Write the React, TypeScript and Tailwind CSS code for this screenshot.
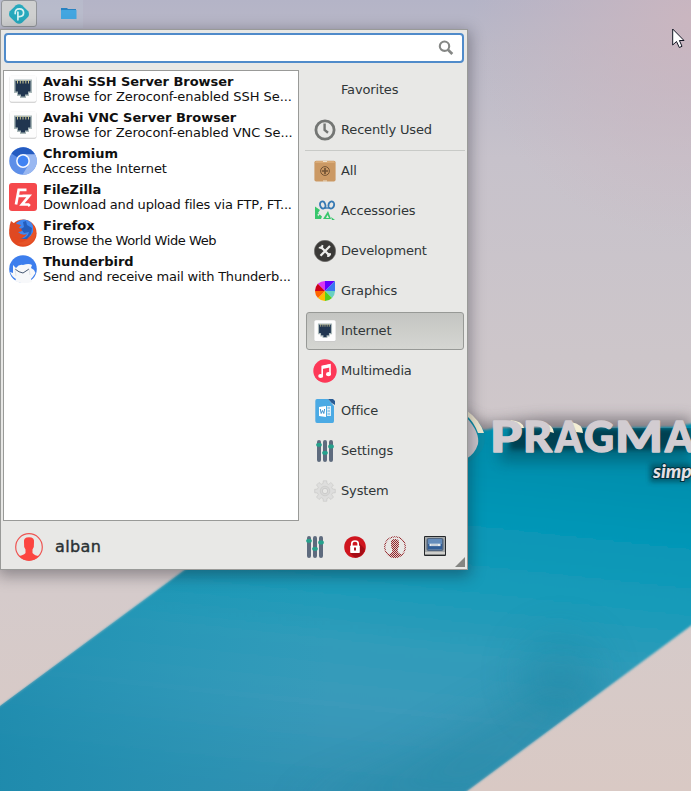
import React from 'react';

function Wallpaper() {
  return (
    <svg className="absolute inset-0" width="691" height="791" viewBox="0 0 691 791">
      <defs>
        <linearGradient id="sky" x1="0" y1="0" x2="0" y2="1">
          <stop offset="0" stopColor="#b4b4c7" />
          <stop offset="0.06" stopColor="#bbb9c7" />
          <stop offset="0.2" stopColor="#c7c2cb" />
          <stop offset="0.45" stopColor="#cdc6ca" />
          <stop offset="0.75" stopColor="#d5cbcb" />
          <stop offset="1" stopColor="#d9c9c4" />
        </linearGradient>
        <radialGradient id="blush" cx="691" cy="20" r="220" gradientUnits="userSpaceOnUse">
          <stop offset="0" stopColor="#ccb6bf" stopOpacity="0.9" />
          <stop offset="1" stopColor="#ccb6bf" stopOpacity="0" />
        </radialGradient>
        <linearGradient id="sea" x1="400" y1="430" x2="360" y2="800" gradientUnits="userSpaceOnUse">
          <stop offset="0" stopColor="#058dab" />
          <stop offset="0.2" stopColor="#0396b6" />
          <stop offset="0.4" stopColor="#189bb9" />
          <stop offset="0.58" stopColor="#309cba" />
          <stop offset="0.75" stopColor="#3a9aba" />
          <stop offset="1" stopColor="#3190b1" />
        </linearGradient>
        <linearGradient id="seaLeft" x1="0" y1="0" x2="330" y2="0" gradientUnits="userSpaceOnUse">
          <stop offset="0" stopColor="#1287aa" stopOpacity="0.6" />
          <stop offset="1" stopColor="#1295b6" stopOpacity="0" />
        </linearGradient>
        <filter id="soft" x="-5%" y="-5%" width="110%" height="110%"><feGaussianBlur stdDeviation="1.3" /></filter>
        <filter id="cloud" x="-50%" y="-50%" width="200%" height="200%"><feGaussianBlur stdDeviation="20" /></filter>
        <filter id="shade" x="-20%" y="-80%" width="140%" height="260%"><feGaussianBlur stdDeviation="7" /></filter>
        <filter id="drop" x="-10%" y="-30%" width="120%" height="160%"><feGaussianBlur stdDeviation="2.5" /></filter>
        <clipPath id="band"><path d="M0 706L186 569L370 430H486L500 428H691V625L467 791H0Z" /></clipPath>
      </defs>
      <rect width="691" height="791" fill="url(#sky)" />
      <rect width="691" height="260" fill="url(#blush)" />
      <path d="M460 410L484 424L540 418H691V445H460Z" fill="#504c52" opacity=".6" filter="url(#shade)" />
      <path d="M-10 714L186 569L370 430H486L495 428Q600 428 675 427L700 422V619L467 791L440 811H-10Z" fill="url(#sea)" filter="url(#soft)" />
      <g clipPath="url(#band)">
        <rect y="400" width="400" height="400" fill="url(#seaLeft)" />
        <path d="M290 810L400 765L560 670L610 700L480 800Z" fill="#23849f" opacity=".38" filter="url(#cloud)" />
        <ellipse cx="560" cy="675" rx="42" ry="42" fill="#16809d" opacity=".26" filter="url(#cloud)" />
        <path d="M510 428H691V450H510Z" fill="#002e3a" opacity=".8" filter="url(#drop)" />
        <path d="M500 440H691V462H500Z" fill="#004455" opacity=".45" filter="url(#shade)" />
        <path d="M650 464H691V482H650Z" fill="#00303c" opacity=".55" filter="url(#drop)" />
      </g>
      <path d="M466 413C483 422 489 436 482 450Q475 459 466 464Z" fill="#098ba6" />
      <path d="M466 417Q480 432 478 444Q475 454 466 459Z" fill="#cbc6cb" />
      <path d="M466 410Q480 420 484 433L478 433Q474 422 466 415Z" fill="#eee7cf" />
      <path d="M510 420Q523 421 524 428L519 428Q515 423 510 420ZM543 423Q553 424 554 433L547 431ZM571 422Q583 424 583 433L576 432Z" fill="#f5eed4" />
      <g fontFamily="Lato, Inter, sans-serif" fontWeight="900" fontSize="42" strokeLinejoin="round" fill="#d2ccd1" stroke="#d2ccd1" strokeWidth="1.4">
        <text x="490" y="452" textLength="32" lengthAdjust="spacingAndGlyphs">P</text>
        <text x="523" y="452" textLength="29" lengthAdjust="spacingAndGlyphs">R</text>
        <text x="555" y="452" textLength="27" lengthAdjust="spacingAndGlyphs">A</text>
        <text x="584" y="452" textLength="30" lengthAdjust="spacingAndGlyphs">G</text>
        <text x="615" y="452" textLength="48" lengthAdjust="spacingAndGlyphs">M</text>
        <text x="665" y="452" textLength="29" lengthAdjust="spacingAndGlyphs">A</text>
      </g>
      <text x="653" y="478" fontFamily="Lato, sans-serif" fontWeight="900" fontStyle="italic" fontSize="19.5" fill="#e4e0e4" stroke="#00303c" strokeWidth="2" paintOrder="stroke">simp</text>
    </svg>
  );
}

function Ethernet({ size = 28 }: { size?: number }) {
  return (
    <svg className="shrink-0" width={size} height={size} viewBox="0 0 28 28">
      <rect x=".5" y=".7" width="27" height="27" rx="2" fill="#c9c9c9" />
      <rect x=".5" y=".3" width="27" height="26.4" rx="2" fill="#fdfdfd" />
      <path d="M5 4.5H23V18H20V21H17V23H11V21H8V18H5Z" fill="#aab8b9" />
      <path d="M6.5 6H21.5V16.5H19V19.5H16V21.5H12V19.5H9V16.5H6.5Z" fill="#213650" />
      <path d="M8.5 5V8.5M11.3 5V8.5M14 5V8.5M16.8 5V8.5M19.5 5V8.5" stroke="#c9c391" strokeWidth="1" />
    </svg>
  );
}
function Chromium() {
  return (
    <svg className="shrink-0" width="28" height="28" viewBox="0 0 28 28">
      <circle cx="14" cy="14" r="13.8" fill="#5e8fe8" />
      <path d="M14 14L2.5 6.6A13.8 13.8 0 0 1 26 7.2Z" fill="#245bc0" />
      <path d="M14 7.2H26A13.8 13.8 0 0 1 13.5 27.8L20 17Z" fill="#9ab8f1" />
      <circle cx="14" cy="14" r="6.9" fill="#f8faff" /><circle cx="14" cy="14" r="5.4" fill="#4083f3" />
    </svg>
  );
}
function FileZilla() {
  return (
    <svg className="shrink-0" width="28" height="28" viewBox="0 0 28 28">
      <rect width="28" height="28" rx="3" fill="#f5494c" />
      <path d="M7 21.5L9.7 6.8H17.5M8.6 13H14.6M13.5 12.8H20.2L13 21.5H19.4L20.8 23" fill="none" stroke="#fff" strokeWidth="2.7" />
    </svg>
  );
}
function Firefox() {
  return (
    <svg className="shrink-0" width="28" height="28" viewBox="0 0 28 28">
      <circle cx="14" cy="14.2" r="13.6" fill="#e2481f" />
      <circle cx="15" cy="10" r="9.6" fill="#4087ef" />
      <path d="M2 2Q5 5 8 5L12 6L10 9L14 10Q13 13 9 13Q13 17 18 15Q13 22 6 18L1 18Q-1 9 2 2Z" fill="#df4922" />
      <path d="M14 3L17 2L18 6L23 9L22 15L18 20L11 20Q19 19 20 13L15 14L12 10L15 8Z" fill="#255dbb" />
      <path d="M24 6Q30 14 24 22Q17 29 8 24Q20 23 24 13Z" fill="#e65328" />
    </svg>
  );
}
function Thunderbird() {
  return (
    <svg className="shrink-0" width="28" height="28" viewBox="0 0 28 28">
      <circle cx="14" cy="14" r="13.8" fill="#3d7eed" />
      <path d="M1 17L4 18L4 10L7 13Q10 9 14 10Q20 8 23 10L22 13L25 15L26.5 18Q24 22 22 24L23 27Q14 30 6 26L7 24Q3 22 1 17Z" fill="#f7f8fa" />
      <path d="M6 14Q10 17.5 14 18L20 14" fill="none" stroke="#465873" strokeWidth="1" />
      <path d="M6 14L7 21M20 14L21 20" stroke="#d7dbe1" strokeWidth=".7" />
    </svg>
  );
}
function Sliders() {
  return (
    <svg width="22" height="22" viewBox="0 0 22 22">
      <path d="M5 2V20M11 2V20M17 2V20" stroke="#5e6b7e" strokeWidth="4" strokeLinecap="round" />
      <path d="M4 4.8H6M10 12.8H12M16 6.5H18" stroke="#25a18c" strokeWidth="3.8" strokeLinecap="round" />
    </svg>
  );
}
function Recent() {
  return <svg width="22" height="22" viewBox="0 0 22 22"><circle cx="11" cy="11" r="9.1" fill="none" stroke="#747674" strokeWidth="2.8" /><path d="M10.6 4.5V11L14 13.8" fill="none" stroke="#747674" strokeWidth="2.4" /></svg>;
}
function All() {
  return (
    <svg width="22" height="22" viewBox="0 0 22 22">
      <rect x=".4" y=".8" width="21.2" height="20.8" rx="1.8" fill="#cb9964" /><path d="M2 1H20L21 3H1Z" fill="#d9ab78" />
      <path d="M9 1H13V2H9ZM9 20.5H13V21.5H9Z" fill="#eee1cd" />
      <circle cx="11" cy="11" r="4.4" fill="none" stroke="#735334" /><path d="M11 8V14M8 11H14" stroke="#735334" strokeWidth="1.7" />
    </svg>
  );
}
function Accessories() {
  return (
    <svg width="22" height="22" viewBox="0 0 22 22">
      <path d="M1 6.5L6 10L4 13L8 16.5L7 19L1 19ZM9 19L14 11L17 19ZM17 17L21 20H18Z" fill="#38c66c" />
      <ellipse cx="8.7" cy="5" rx="2.6" ry="3.6" fill="#e8e8e6" stroke="#3679b3" strokeWidth="1.8" transform="rotate(-18 8.7 5)" />
      <ellipse cx="17.3" cy="5" rx="2.8" ry="3.6" fill="#e8e8e6" stroke="#3679b3" strokeWidth="1.8" transform="rotate(18 17.3 5)" />
      <path d="M10.5 8H16" stroke="#3679b3" strokeWidth="1.4" />
      <path d="M3.5 14H6L4 16.5ZM13.5 15L15 18H12Z" fill="#e8e8e6" />
    </svg>
  );
}
function Development() {
  return (
    <svg width="22" height="22" viewBox="0 0 22 22">
      <circle cx="11" cy="11" r="10.7" fill="#3b3a38" stroke="#757472" strokeWidth=".6" />
      <path d="M6.5 6.5L16 16M16 6L6.5 15.8" stroke="#ededeb" strokeWidth="2.2" />
      <path d="M4.8 7.5L8 8.3L8.5 5M14 17L14.3 14L17 14.2" stroke="#ededeb" strokeWidth="1.8" fill="none" />
    </svg>
  );
}
function Graphics() {
  return (
    <svg width="22" height="22" viewBox="0 0 22 22">
      <path d="M11 11L3.8 3.8Q7 1 11 1Z" fill="#d936f2" /><path d="M11 11V1H21Z" fill="#6500ff" /><path d="M11 11L21 1V11Z" fill="#3977f1" />
      <path d="M11 11H21Q21 15 18 18Z" fill="#69d0c3" /><path d="M11 11L18 18Q15 21 11 21Z" fill="#58cf1b" /><path d="M11 11V21Q7 21 4 18Z" fill="#ffbd00" />
      <path d="M11 11L4 18Q1 15 1 11Z" fill="#ff6500" /><path d="M11 11H1Q1 7 3.8 3.8Z" fill="#ce001b" />
    </svg>
  );
}
function Multimedia() {
  return <svg width="24" height="24" viewBox="0 0 24 24"><circle cx="12" cy="12" r="11.7" fill="#fd3857" /><path d="M9.2 17V7.3L17 5.8V15" stroke="#fff" strokeWidth="1.6" fill="none" /><path d="M9.2 6.9L17 5.3V8.6L9.2 10Z" fill="#fff" /><ellipse cx="7.7" cy="17" rx="2.5" ry="2.1" fill="#fff" /><ellipse cx="15.5" cy="15.2" rx="2.5" ry="2.1" fill="#fff" /></svg>;
}
function Office() {
  return (
    <svg width="22" height="24" viewBox="0 0 22 24">
      <path d="M3 0H14L20 7V22Q20 24 18.5 24H3Q1.3 24 1.3 22V2Q1.3 0 3 0Z" fill="#4baae4" /><path d="M14 0H19L21 2V6Q17 4 14 0Z" fill="#285a93" />
      <path d="M13 7H17V17H13Z" fill="#dceef9" /><path d="M5 8L12 7V18L5 17Z" fill="#fff" /><path d="M6.3 10L7.2 14.5L8.5 11.5L9.8 14.5L10.6 10" fill="none" stroke="#3b91ce" /><path d="M13.5 9H16M13.5 12H16M13.5 15H16" stroke="#62acd9" />
    </svg>
  );
}
function Gear() {
  return (
    <svg width="22" height="22" viewBox="0 0 22 22">
      <g fill="#dededd" stroke="#c6c6c5" strokeWidth=".6">
        <path d="M9 3.5L9.3 .8H12.7L13 3.5L14.7 4.4L16.8 2.5L19.4 5L17.7 7.2L18.5 9L21.3 9.3V12.7L18.5 13L17.7 14.8L19.5 17L17 19.5L14.8 17.7L13 18.5L12.7 21.3H9.3L9 18.5L7.2 17.7L5 19.5L2.5 17L4.3 14.8L3.5 13L.7 12.7V9.3L3.5 9L4.3 7.2L2.5 5L5 2.5L7.2 4.3Z" />
        <circle cx="11" cy="11" r="4.8" fill="#d8d8d7" /><circle cx="11" cy="11" r="2.7" fill="#e7e7e5" stroke="#bcbcbc" />
      </g>
    </svg>
  );
}
function User() {
  return (
    <svg width="28" height="28" viewBox="0 0 28 28"><circle cx="14" cy="14" r="13.3" fill="none" stroke="#ee5553" strokeWidth="1.2" />
      <path d="M9 9Q8.3 4.2 14 4.2Q19.7 4.2 19 9L18.8 14L17.5 16.5V20Q20 23 24 23Q20 27.5 14 27.5Q8 27.5 4 23Q9 22 10.5 20V16.5L9.2 14Z" fill="#fc4540" />
    </svg>
  );
}
function Lock() {
  return <svg width="22" height="22" viewBox="0 0 22 22"><circle cx="11" cy="11" r="10.8" fill="#cf151e" /><path d="M15 7L21 13Q19 21 11 21.8L6 17Z" fill="#a50d16" /><path d="M7.8 10V7.5Q7.8 5 11 5Q14.2 5 14.2 7.5V10" fill="none" stroke="#fff" strokeWidth="1.7" /><rect x="6.2" y="9.5" width="9.6" height="7.5" rx=".8" fill="#fff" /><path d="M11 11.5V14.5" stroke="#ad1820" strokeWidth="2" /></svg>;
}
function SwitchUser() {
  return (
    <svg width="22" height="22" viewBox="0 0 22 22">
      <defs><pattern id="dots" width="2" height="2" patternUnits="userSpaceOnUse"><rect width="2" height="2" fill="#e2cccb" /><rect width="1" height="1" fill="#8f252a" /><rect x="1" y="1" width="1" height="1" fill="#8f252a" /></pattern></defs>
      <circle cx="11" cy="11" r="10.3" fill="none" stroke="url(#dots)" strokeWidth="1.1" />
      <path d="M7 7Q6.5 3 11 3Q15.5 3 15 7L14.8 11L13.8 13V16Q16 18.5 19 18.5Q15 22 11 22Q7 22 3 18.5Q7 18 8.2 16V13L7.2 11Z" fill="url(#dots)" />
    </svg>
  );
}
function Monitor() {
  return (
    <svg className="mb-0.5" width="22" height="20" viewBox="0 0 22 20">
      <rect width="22" height="20" rx="1" fill="#24282b" /><rect x="1" y="1" width="20" height="15" fill="#a4a8a9" /><path d="M1 16H21V18.6H1Z" fill="#cfcfcc" />
      <rect x="2.5" y="2" width="17" height="13" rx="2" fill="#526782" /><rect x="4" y="3" width="14" height="10.5" rx="1" fill="#648cbb" /><path d="M4 8H18V13H4Z" fill="#315e97" /><rect x="5.5" y="7.7" width="11" height="2.4" fill="#e9edf0" /><path d="M7 9H14" stroke="#7e92a8" strokeWidth=".6" />
    </svg>
  );
}

const apps = [
  { icon: <Ethernet />, name: 'Avahi SSH Server Browser', text: 'Browse for Zeroconf-enabled SSH Se...', title: 'tracking-[-0.06px]', body: 'tracking-[-0.05px]' },
  { icon: <Ethernet />, name: 'Avahi VNC Server Browser', text: 'Browse for Zeroconf-enabled VNC Se...', title: 'tracking-normal', body: 'tracking-[-0.07px]' },
  { icon: <Chromium />, name: 'Chromium', text: 'Access the Internet', title: 'tracking-normal', body: 'tracking-[-0.1px]' },
  { icon: <FileZilla />, name: 'FileZilla', text: 'Download and upload files via FTP, FT...', title: 'tracking-normal', body: 'tracking-[-0.21px]' },
  { icon: <Firefox />, name: 'Firefox', text: 'Browse the World Wide Web', title: 'tracking-normal', body: 'tracking-[-0.4px]' },
  { icon: <Thunderbird />, name: 'Thunderbird', text: 'Send and receive mail with Thunderb...', title: 'tracking-normal', body: 'tracking-[-0.21px]' },
];
const categories = [
  { name: 'All', icon: <All /> },
  { name: 'Accessories', icon: <Accessories /> },
  { name: 'Development', icon: <Development /> },
  { name: 'Graphics', icon: <Graphics /> },
  { name: 'Internet', icon: <Ethernet size={22} />, active: true },
  { name: 'Multimedia', icon: <Multimedia /> },
  { name: 'Office', icon: <Office /> },
  { name: 'Settings', icon: <Sliders /> },
  { name: 'System', icon: <Gear /> },
];

function Category({ name, icon, active }: { name: string; icon?: React.ReactNode; active?: boolean }) {
  return (
    <button className={`flex h-[38px] w-[158px] shrink-0 items-center rounded-[3px] border pl-1.5 text-left ${active ? 'border-[#979996] bg-linear-to-b from-[#c4c5c2] to-[#d5d6d2]' : 'border-transparent'}`}>
      <span className="flex w-6 shrink-0 justify-center">{icon}</span>
      <span className="ml-1 text-[13px] leading-4 tracking-[-0.16px] text-[#303638]">{name}</span>
    </button>
  );
}

export default function App() {
  return (
    <div className="relative h-[791px] w-[691px] overflow-hidden font-['DejaVu_Sans',sans-serif]">
      <Wallpaper />
      <div className="relative flex h-[28px] w-[83px] items-start bg-[#bdc5d4]/35">
        <div className="ml-px flex h-[27px] w-9 items-center justify-center rounded-[3px] border border-[#92959a] bg-[#cfd0d0]">
          <svg width="20" height="20" viewBox="0 0 20 20"><path d="M7 1.2Q10-.6 13 1.2L19.2 7.2Q20.8 10 19.2 12.8L13 18.8Q10 20.6 7 18.8L.8 12.8Q-.8 10 .8 7.2Z" fill="#27a9bd" /><path d="M8.9 15.8V8.2M6.2 9.6Q6 4.8 10.4 4.8Q14.6 4.8 14.6 8.8Q14.6 12.6 10.4 12.6" fill="none" stroke="#d7f2f2" strokeWidth="1.7" strokeLinecap="round" /></svg>
        </div>
        <svg className="mt-[7px] ml-[23.5px]" width="16" height="13" viewBox="0 0 16 13"><path d="M0 1H6L7 2H15V8H0Z" fill="#2882c1" /><rect y="3" width="15.5" height="9" rx=".6" fill="#43a6e0" /></svg>
      </div>
      <main className="relative mt-px flex h-[541px] w-[468px] flex-col border border-[#999a98] bg-[#e8e8e6] px-[2px] pt-[3px] shadow-[0_4px_14px_2px_rgba(20,20,30,0.36)]">
        <div className="ml-px flex h-[30px] w-[460px] shrink-0 items-center justify-end rounded-[4px] border-2 border-[#508bca] bg-white pr-2">
          <svg width="16" height="16" viewBox="0 0 16 16"><circle cx="6.5" cy="6.2" r="4.7" fill="none" stroke="#858785" strokeWidth="2.1" /><path d="M10 9.8L14.3 14" stroke="#858785" strokeWidth="2.7" /></svg>
        </div>
        <div className="mt-[7px] flex h-[451px] shrink-0">
          <section className="flex h-[451px] w-[296px] shrink-0 flex-col border border-[#999a98] bg-white">
            {apps.map((app) => (
              <div key={app.name} className="flex h-9 shrink-0 items-center pl-[5px]">
                {app.icon}
                <div className="ml-1.5 text-[13px] leading-[15px] whitespace-nowrap text-[#101010]">
                  <div className={`font-bold ${app.title}`}>{app.name}</div>
                  <div className={app.body}>{app.text}</div>
                </div>
              </div>
            ))}
          </section>
          <nav className="mt-px ml-[7px] flex w-[158px] flex-col gap-[2px]">
            <Category name="Favorites" />
            <Category name="Recently Used" icon={<Recent />} />
            <div className="-my-px -ml-px h-px w-[160px] shrink-0 bg-[#c8cac7]" />
            {categories.map((c) => <Category key={c.name} {...c} />)}
          </nav>
        </div>
        <footer className="flex h-[48px] shrink-0 items-center">
          <div className="mt-1 ml-3"><User /></div>
          <span className="mt-1 ml-3 text-base leading-5 tracking-[0.4px] text-[#2b3134] [-webkit-text-stroke:0.4px_#2b3134]">alban</span>
          <div className="mt-1 mr-[19px] ml-auto flex items-center gap-[18px]"><Sliders /><Lock /><SwitchUser /><Monitor /></div>
        </footer>
        <svg className="absolute right-[2px] bottom-[2px]" width="10" height="10" viewBox="0 0 10 10"><path d="M0 10L10 0V10Z" fill="#858683" /></svg>
      </main>
      <svg className="absolute top-[28px] left-[672px]" width="13" height="21" viewBox="0 0 13 21"><path d="M.7 1V17L4.5 13.5L7.3 19.5L10 18.3L7.4 12.5H12Z" fill="#fff" stroke="#111522" strokeWidth="1" /></svg>
    </div>
  );
}
